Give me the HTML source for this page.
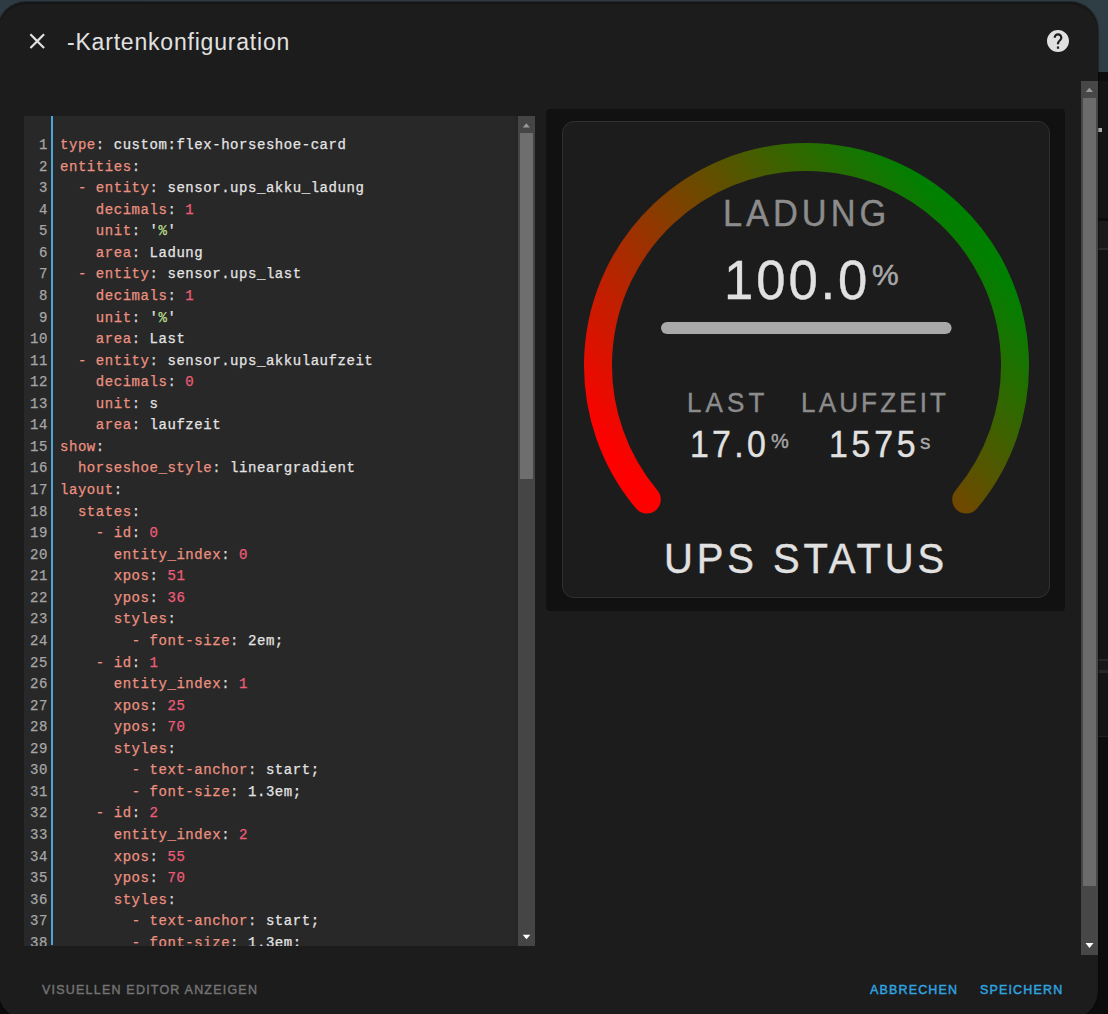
<!DOCTYPE html>
<html><head><meta charset="utf-8">
<style>
html,body{margin:0;padding:0;}
body{width:1108px;height:1014px;overflow:hidden;position:relative;background:#0c0c0c;font-family:"Liberation Sans",sans-serif;}
.abs{position:absolute;}
#topbg{left:0;top:0;width:1108px;height:72px;background:linear-gradient(90deg,#2e3b43 0%,#343c45 50%,#2f3d44 100%);}
#dlg{left:-2px;top:2px;width:1100px;height:1017px;background:#1c1c1c;border-radius:28px;box-shadow:inset 0 2px 1px rgba(0,0,0,0.22),0 0 1px 1px rgba(0,0,0,0.35);}
#title{left:67px;top:26.5px;font-size:23px;line-height:30px;color:#e1e1e1;white-space:nowrap;letter-spacing:0.8px;}
#editor{left:24px;top:116px;width:511px;height:830px;background:#282828;overflow:hidden;}
#gut{left:50.8px;top:116px;width:2.7px;height:829px;background:#4aa5dc;}
.code{font-family:"Liberation Mono",monospace;font-size:14px;letter-spacing:0.55px;white-space:pre;-webkit-text-stroke:0.25px currentColor;line-height:21.57px;}
#nums{left:-24px;top:19px;width:48px;text-align:right;color:#a6a6a6;}
#lines{left:36px;top:19px;color:#e0e0e0;}
.k{color:#ec9080;}
.p{color:#d8d8d8;}
.v{color:#e4e4e4;}
.n{color:#ee5c78;}
.g{color:#b8dc8c;}
#escroll{left:518px;top:116px;width:17px;height:830px;background:#454545;}
#ethumb{left:520px;top:133px;width:13px;height:346px;background:#6e6e6e;}
#gauge{left:546px;top:109px;width:519px;height:502px;background:#111111;border-radius:4px;}
#card{left:562px;top:121px;width:486px;height:475px;border:1px solid #303030;border-radius:12px;background:#1c1c1c;}
#scroll{left:1081px;top:81px;width:17px;height:874px;background:#474747;}
#thumb{left:1083px;top:98px;width:13px;height:788px;background:#6b6b6b;}
.lbl{color:#8c8c8c;white-space:nowrap;-webkit-text-stroke:0.4px #8c8c8c;}
.sx{transform:scaleX(0.93);transform-origin:0 0;}
.sd{transform:scaleX(0.94);transform-origin:0 0;}
.val{color:#e1e1e1;white-space:nowrap;-webkit-text-stroke:0.4px #e1e1e1;}
.btn{font-size:13.6px;font-weight:normal;letter-spacing:1.25px;white-space:nowrap;line-height:16px;transform:scaleX(0.92);transform-origin:0 0;-webkit-text-stroke:0.45px currentColor;}
</style></head><body>
<div id="topbg" class="abs"></div>
<div class="abs" style="left:1098px;top:72px;width:10px;height:9px;background:#0d0d0d;"></div>
<div class="abs" style="left:1098px;top:81px;width:10px;height:655px;background:#141414;"></div>
<div class="abs" style="left:1098px;top:736px;width:10px;height:1px;background:#202020;"></div>
<div class="abs" style="left:1098px;top:128px;width:4px;height:4px;background:#a8a8a8;"></div>
<div class="abs" style="left:1098px;top:218px;width:10px;height:3px;background:#0c0c0c;"></div>
<div class="abs" style="left:1098px;top:221px;width:10px;height:27px;background:#1a1a1a;"></div>
<div class="abs" style="left:1098px;top:248px;width:10px;height:2px;background:#2a2a2a;"></div>
<div class="abs" style="left:1098px;top:659px;width:10px;height:2px;background:#262626;"></div>
<div class="abs" style="left:1098px;top:661px;width:10px;height:9px;background:#181818;"></div>
<div class="abs" style="left:1098px;top:670px;width:10px;height:3px;background:#262626;"></div>
<div id="dlg" class="abs"></div>
<svg class="abs" style="left:0;top:0" width="1108" height="1014">
  <g transform="translate(24.2 28.1) scale(1.086)"><path fill="#e1e1e1" d="M19,6.41L17.59,5L12,10.59L6.41,5L5,6.41L10.59,12L5,17.59L6.41,19L12,13.41L17.59,19L19,17.59L13.41,12L19,6.41Z"/></g>
  <g transform="translate(1044.8 27.8) scale(1.1)"><path fill="#e1e1e1" d="M15.07,11.25L14.17,12.17C13.45,12.89 13,13.5 13,15H11V14.5C11,13.39 11.45,12.39 12.17,11.67L13.41,10.41C13.78,10.05 14,9.55 14,9C14,7.89 13.1,7 12,7A2,2 0 0,0 10,9H8A4,4 0 0,1 12,5A4,4 0 0,1 16,9C16,9.88 15.640,10.67 15.07,11.25M13,19H11V17H13M12,2A10,10 0 0,0 2,12A10,10 0 0,0 12,22A10,10 0 0,0 22,12C22,6.47 17.5,2 12,2Z"/></g>
</svg>
<div id="title" class="abs">-Kartenkonfiguration</div>

<div id="editor" class="abs"><div id="nums" class="abs code"><div>1</div><div>2</div><div>3</div><div>4</div><div>5</div><div>6</div><div>7</div><div>8</div><div>9</div><div>10</div><div>11</div><div>12</div><div>13</div><div>14</div><div>15</div><div>16</div><div>17</div><div>18</div><div>19</div><div>20</div><div>21</div><div>22</div><div>23</div><div>24</div><div>25</div><div>26</div><div>27</div><div>28</div><div>29</div><div>30</div><div>31</div><div>32</div><div>33</div><div>34</div><div>35</div><div>36</div><div>37</div><div>38</div></div><div id="lines" class="abs code"><div><span class="k">type</span><span class="p">: </span><span class="v">custom:flex-horseshoe-card</span></div><div><span class="k">entities</span><span class="p">:</span></div><div>  <span class="k">- entity</span><span class="p">: </span><span class="v">sensor.ups_akku_ladung</span></div><div>    <span class="k">decimals</span><span class="p">: </span><span class="n">1</span></div><div>    <span class="k">unit</span><span class="p">: </span><span class="v">&#x27;</span><span class="g">%</span><span class="v">&#x27;</span></div><div>    <span class="k">area</span><span class="p">: </span><span class="v">Ladung</span></div><div>  <span class="k">- entity</span><span class="p">: </span><span class="v">sensor.ups_last</span></div><div>    <span class="k">decimals</span><span class="p">: </span><span class="n">1</span></div><div>    <span class="k">unit</span><span class="p">: </span><span class="v">&#x27;</span><span class="g">%</span><span class="v">&#x27;</span></div><div>    <span class="k">area</span><span class="p">: </span><span class="v">Last</span></div><div>  <span class="k">- entity</span><span class="p">: </span><span class="v">sensor.ups_akkulaufzeit</span></div><div>    <span class="k">decimals</span><span class="p">: </span><span class="n">0</span></div><div>    <span class="k">unit</span><span class="p">: </span><span class="v">s</span></div><div>    <span class="k">area</span><span class="p">: </span><span class="v">laufzeit</span></div><div><span class="k">show</span><span class="p">:</span></div><div>  <span class="k">horseshoe_style</span><span class="p">: </span><span class="v">lineargradient</span></div><div><span class="k">layout</span><span class="p">:</span></div><div>  <span class="k">states</span><span class="p">:</span></div><div>    <span class="k">- id</span><span class="p">: </span><span class="n">0</span></div><div>      <span class="k">entity_index</span><span class="p">: </span><span class="n">0</span></div><div>      <span class="k">xpos</span><span class="p">: </span><span class="n">51</span></div><div>      <span class="k">ypos</span><span class="p">: </span><span class="n">36</span></div><div>      <span class="k">styles</span><span class="p">:</span></div><div>        <span class="k">- font-size</span><span class="p">: </span><span class="v">2em;</span></div><div>    <span class="k">- id</span><span class="p">: </span><span class="n">1</span></div><div>      <span class="k">entity_index</span><span class="p">: </span><span class="n">1</span></div><div>      <span class="k">xpos</span><span class="p">: </span><span class="n">25</span></div><div>      <span class="k">ypos</span><span class="p">: </span><span class="n">70</span></div><div>      <span class="k">styles</span><span class="p">:</span></div><div>        <span class="k">- text-anchor</span><span class="p">: </span><span class="v">start;</span></div><div>        <span class="k">- font-size</span><span class="p">: </span><span class="v">1.3em;</span></div><div>    <span class="k">- id</span><span class="p">: </span><span class="n">2</span></div><div>      <span class="k">entity_index</span><span class="p">: </span><span class="n">2</span></div><div>      <span class="k">xpos</span><span class="p">: </span><span class="n">55</span></div><div>      <span class="k">ypos</span><span class="p">: </span><span class="n">70</span></div><div>      <span class="k">styles</span><span class="p">:</span></div><div>        <span class="k">- text-anchor</span><span class="p">: </span><span class="v">start;</span></div><div>        <span class="k">- font-size</span><span class="p">: </span><span class="v">1.3em;</span></div></div></div>
<div id="gut" class="abs"></div>
<div class="abs" style="left:514.6px;top:116px;width:3.4px;height:830px;background:#262626;"></div>
<div id="escroll" class="abs"></div>
<div id="ethumb" class="abs"></div>

<div id="gauge" class="abs"></div>
<div id="card" class="abs"></div>
<svg class="abs" style="left:0;top:0" width="1108" height="1014">
  <defs>
    <linearGradient id="hg" gradientUnits="userSpaceOnUse" x1="966.22" y1="231.48" x2="646.78" y2="499.52">
      <stop offset="0" stop-color="#008000"/>
      <stop offset="1" stop-color="#ff0000"/>
    </linearGradient>
  </defs>
  <path d="M646.78 499.52 A208.5 208.5 0 1 1 966.22 499.52" stroke="url(#hg)" stroke-width="28" stroke-linecap="round" fill="none"/>
  <line x1="667" y1="328" x2="945.6" y2="328" stroke="#a9a9a9" stroke-width="12" stroke-linecap="round"/>
</svg>
<div class="abs lbl sx" style="left:723px;top:193px;font-size:37px;letter-spacing:4.26px;">LADUNG</div>
<div class="abs val sd" style="left:724px;top:247px;font-size:56px;letter-spacing:3.1px;">100.0</div>
<div class="abs lbl" style="left:872px;top:258px;font-size:30px;color:#a8a8a8;-webkit-text-stroke:0.5px #a8a8a8;">%</div>
<div class="abs lbl sx" style="left:687px;top:387px;font-size:28px;letter-spacing:4.44px;">LAST</div>
<div class="abs lbl sx" style="left:801px;top:387px;font-size:28px;letter-spacing:3.38px;">LAUFZEIT</div>
<div class="abs val sd" style="left:690px;top:424px;font-size:36px;letter-spacing:3.5px;">17.0</div>
<div class="abs lbl" style="left:771px;top:430px;font-size:20px;color:#a8a8a8;-webkit-text-stroke:0.35px #a8a8a8;">%</div>
<div class="abs val sd" style="left:829px;top:424px;font-size:36px;letter-spacing:4.04px;">1575</div>
<div class="abs lbl" style="left:920px;top:430px;font-size:21px;color:#a8a8a8;-webkit-text-stroke:0.35px #a8a8a8;">s</div>
<div class="abs val sx" style="left:664px;top:534px;font-size:43px;letter-spacing:4.19px;">UPS STATUS</div>

<div id="scroll" class="abs"></div>
<div id="thumb" class="abs"></div>
<svg class="abs" style="left:0;top:0" width="1108" height="1014">
  <path d="M1085.8 92 L1093 92 L1089.4 87.8 Z" fill="#9a9a9a"/>
  <path d="M1085.5 943 L1093.5 943 L1089.5 948 Z" fill="#ffffff"/>
  <path d="M522.8 127.5 L529.9 127.5 L526.35 123.2 Z" fill="#9a9a9a"/>
  <path d="M522.7 934.7 L530.3 934.7 L526.5 939.2 Z" fill="#ffffff"/>
</svg>

<div class="abs btn" style="left:42px;top:982px;color:#737373;letter-spacing:1.31px;">VISUELLEN EDITOR ANZEIGEN</div>
<div class="abs btn" style="left:870px;top:982px;color:#2fa5e0;">ABBRECHEN</div>
<div class="abs btn" style="left:980px;top:982px;color:#2fa5e0;">SPEICHERN</div>
</body></html>
